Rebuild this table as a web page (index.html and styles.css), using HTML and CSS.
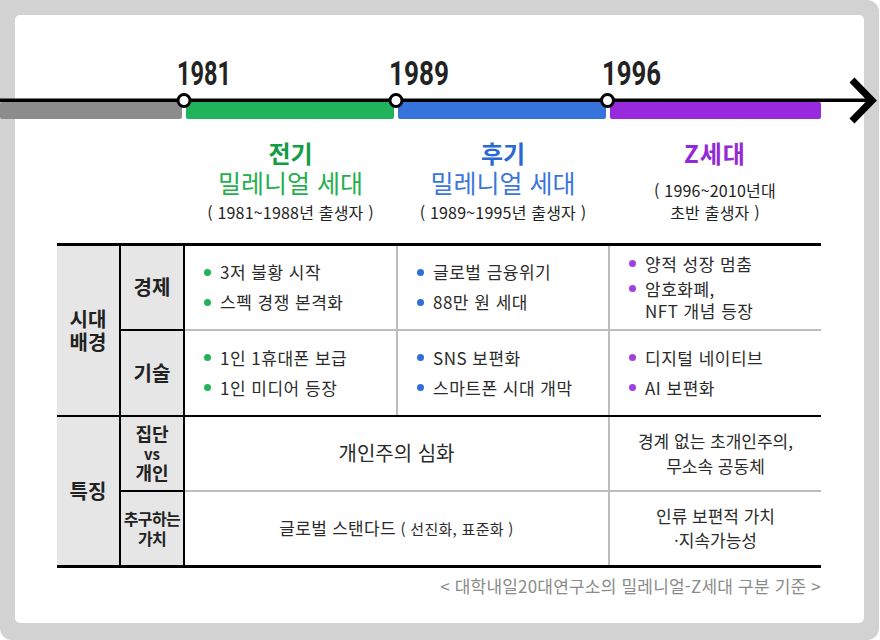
FILE: index.html
```html
<!DOCTYPE html>
<html lang="ko">
<head>
<meta charset="utf-8">
<link rel="stylesheet" href="styles.css">
</head>
<body>
<div class="frame">
  <div class="card">
    <svg class="timeline" width="880" height="110" viewBox="0 15 880 110" xmlns="http://www.w3.org/2000/svg">
      <rect x="0" y="102" width="182" height="17" rx="2" fill="#8c8c8c"/>
      <rect x="186" y="102" width="208" height="17" rx="2" fill="#21b35b"/>
      <rect x="398" y="102" width="208" height="17" rx="2" fill="#3673da"/>
      <rect x="610" y="102" width="211" height="17" rx="2" fill="#9829dc"/>
      <rect x="0" y="98.5" width="872" height="3.5" fill="#000"/>
      <polyline points="852,80 872,100.5 852,121" fill="none" stroke="#000" stroke-width="7" stroke-linejoin="miter"/>
      <circle cx="184" cy="100.5" r="6" fill="#fff" stroke="#000" stroke-width="3"/>
      <circle cx="396" cy="100.5" r="6" fill="#fff" stroke="#000" stroke-width="3"/>
      <circle cx="607.5" cy="100.5" r="6" fill="#fff" stroke="#000" stroke-width="3"/>
      <text class="year" x="177" y="85" textLength="54" lengthAdjust="spacingAndGlyphs">1981</text>
      <text class="year" x="389" y="85" textLength="60" lengthAdjust="spacingAndGlyphs">1989</text>
      <text class="year" x="602" y="85" textLength="59" lengthAdjust="spacingAndGlyphs">1996</text>
    </svg>

    <div class="heads">
      <div></div>
      <div></div>
      <div class="head head-green">
        <div class="h-title">전기</div>
        <div class="h-bottom">
          <div class="h-name">밀레니얼 세대</div>
          <div class="h-sub">( 1981~1988년 출생자 )</div>
        </div>
      </div>
      <div class="head head-blue">
        <div class="h-title">후기</div>
        <div class="h-bottom">
          <div class="h-name">밀레니얼 세대</div>
          <div class="h-sub">( 1989~1995년 출생자 )</div>
        </div>
      </div>
      <div class="head head-purple">
        <div class="h-title">Z세대</div>
        <div class="h-bottom">
          <div class="h-sub2">( 1996~2010년대</div>
          <div class="h-sub2">초반 출생자 )</div>
        </div>
      </div>
    </div>

    <table class="grid">
      <colgroup>
        <col class="c1"><col class="c2"><col class="c3"><col class="c4"><col class="c5">
      </colgroup>
      <tr class="r1">
        <th class="cat group-top" rowspan="2">시대<br>배경</th>
        <th class="sub sub-mid">경제</th>
        <td class="cell cell-mid">
          <ul class="items green"><li>3저 불황 시작</li><li>스펙 경쟁 본격화</li></ul>
        </td>
        <td class="cell cell-mid">
          <ul class="items blue"><li>글로벌 금융위기</li><li>88만 원 세대</li></ul>
        </td>
        <td class="cell cell-mid last">
          <ul class="items purple tight"><li>양적 성장 멈춤</li><li>암호화폐,<br>NFT 개념 등장</li></ul>
        </td>
      </tr>
      <tr class="r2">
        <th class="sub sub-end">기술</th>
        <td class="cell cell-end">
          <ul class="items green"><li>1인 1휴대폰 보급</li><li>1인 미디어 등장</li></ul>
        </td>
        <td class="cell cell-end">
          <ul class="items blue"><li>SNS 보편화</li><li>스마트폰 시대 개막</li></ul>
        </td>
        <td class="cell cell-end last">
          <ul class="items purple"><li>디지털 네이티브</li><li>AI 보편화</li></ul>
        </td>
      </tr>
      <tr class="r3">
        <th class="cat" rowspan="2">특징</th>
        <th class="sub sub-mid sub-small">집단<br><span class="vs">vs</span><br>개인</th>
        <td class="cell cell-mid center big" colspan="2">개인주의 심화</td>
        <td class="cell cell-mid center last two">경계 없는 초개인주의,<br>무소속 공동체</td>
      </tr>
      <tr class="r4">
        <th class="sub sub-xs">추구하는<br>가치</th>
        <td class="cell center mid" colspan="2">글로벌 스탠다드<span class="paren"> ( 선진화, 표준화 )</span></td>
        <td class="cell center last two2">인류 보편적 가치<br>·지속가능성</td>
      </tr>
    </table>

    <p class="source">&lt; 대학내일20대연구소의 밀레니얼-Z세대 구분 기준 &gt;</p>
  </div>
</div>
</body>
</html>
```

FILE: styles.css
```css
* { box-sizing: border-box; }

html, body {
  margin: 0;
  padding: 0;
  background: #ffffff;
}

body {
  font-family: "Noto Sans CJK KR", "Noto Sans", sans-serif;
  color: #2b2b2b;
}

.frame {
  width: 879px;
  height: 640px;
  background: #d2d2d2;
  padding: 15px 15px 17px 15px;
  border-radius: 0 12px 12px 12px;
}

.card {
  width: 849px;
  height: 608px;
  background: #ffffff;
  border-radius: 5px;
}

.timeline {
  display: block;
  margin-left: -15px;
  overflow: visible;
}

.year {
  font-family: Roboto, "Liberation Sans", sans-serif;
  font-weight: 700;
  font-size: 33px;
  fill: #222222;
}

/* header row above the table */
.heads {
  display: grid;
  grid-template-columns: 63px 64px 213px 212px 212px;
  margin: 15px 0 0 42px;
  height: 83px;
}

.head {
  display: flex;
  flex-direction: column;
  justify-content: space-between;
  align-items: center;
  text-align: center;
}

.h-title {
  font-size: 24px;
  font-weight: 700;
  line-height: 26px;
}

.head-purple .h-title {
  letter-spacing: 1px;
}

.h-name {
  font-size: 25px;
  line-height: 30px;
}

.h-sub {
  font-size: 16px;
  line-height: 22px;
  margin-top: 4px;
  color: #222222;
  letter-spacing: 0.2px;
}

.h-sub2 {
  font-size: 16px;
  line-height: 22px;
  color: #222222;
  letter-spacing: 0.2px;
}

.head-green .h-title { color: #129c46; }
.head-green .h-name { color: #23b04c; }
.head-blue .h-title { color: #2b68d4; }
.head-blue .h-name { color: #3a76dc; }
.head-purple .h-title { color: #9328d6; }

/* table */
.grid {
  margin: 20px 0 0 42px;
  width: 764px;
  table-layout: fixed;
  border-collapse: collapse;
  border-top: 3px solid #000;
  border-bottom: 3px solid #000;
}

.c1 { width: 63px; }
.c2 { width: 64px; }
.c3 { width: 213px; }
.c4 { width: 212px; }
.c5 { width: 212px; }

.r1 { height: 85px; }
.r2 { height: 86px; }
.r3 { height: 75px; }
.r4 { height: 76px; }

th {
  background: #e6e6e6;
  font-weight: 700;
  color: #222222;
  text-align: center;
  vertical-align: middle;
  padding: 0;
  border-right: 2px solid #000;
}

.cat {
  font-size: 20px;
  line-height: 23px;
}

.group-top {
  border-bottom: 2px solid #000;
}

.sub {
  font-size: 20px;
  line-height: 22px;
}

.sub-mid { border-bottom: 2px solid #000; }
.sub-end { border-bottom: 2px solid #000; }

.sub-small {
  font-size: 18px;
  line-height: 19px;
}

.vs {
  font-size: 15px;
}

.sub-xs {
  font-size: 16px;
  line-height: 20px;
  letter-spacing: -0.6px;
}

.cell {
  padding: 0 0 0 19px;
  vertical-align: middle;
  font-size: 17px;
  line-height: 22px;
  color: #2b2b2b;
  border-right: 2px solid #bdbdbd;
  letter-spacing: 0.5px;
}

.cell.last { border-right: none; }
.cell-mid { border-bottom: 2px solid #bdbdbd; }
.cell-end { border-bottom: 2px solid #000; }

.cell.center {
  padding: 0;
  text-align: center;
  letter-spacing: 0;
}

.cell.big { font-size: 20px; }
.cell.mid { font-size: 17px; letter-spacing: 0.3px; }
.cell.two { line-height: 25px; }
.cell.two2 { line-height: 24px; }

.paren {
  font-size: 15px;
}

.items {
  list-style: none;
  margin: 0;
  padding: 0;
}

.items li {
  display: flex;
  align-items: flex-start;
  gap: 9px;
}

.items li + li { margin-top: 8px; }
.items.tight li + li { margin-top: 3px; }

.items li::before {
  content: "";
  flex: none;
  width: 7px;
  height: 7px;
  margin-top: 7.5px;
  border-radius: 50%;
}

.items.green li::before { background: #22b35a; }
.items.blue li::before { background: #2f6fd8; }
.items.purple li::before { background: #a040e0; }

.source {
  margin: 8px 0 0 42px;
  width: 764px;
  text-align: right;
  font-size: 17px;
  line-height: 20px;
  color: #8a8a8a;
  letter-spacing: 0.2px;
}
```
